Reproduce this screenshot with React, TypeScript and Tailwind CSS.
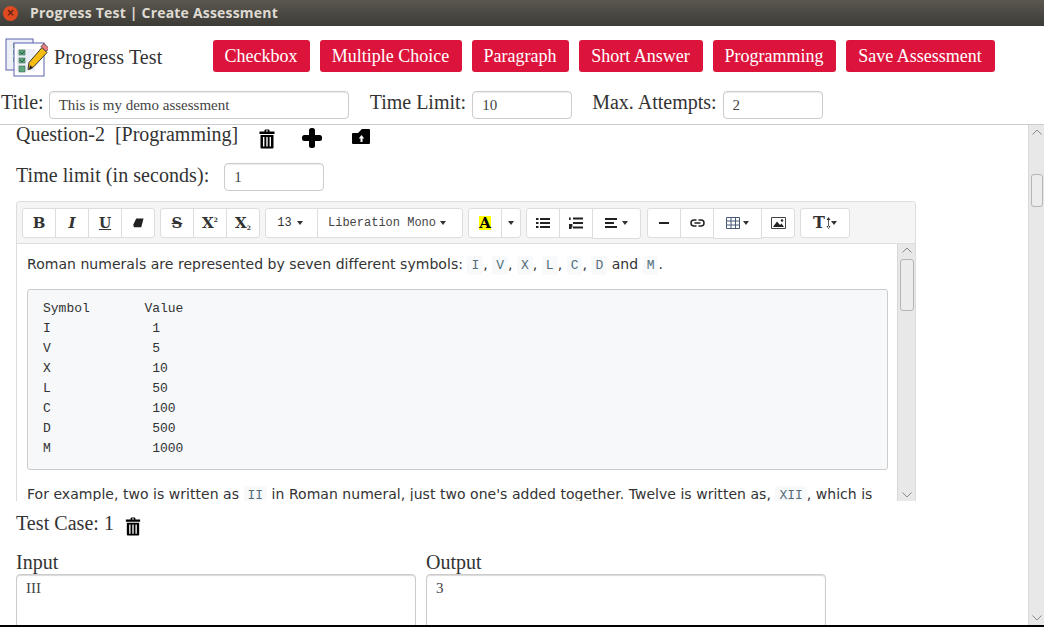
import { ReactNode } from "react";

const TrashIcon = ({ className }: { className?: string }) => (
  <svg viewBox="0 0 16 20" className={className} fill="black">
    <path d="M5.5 1.5 Q5.5 .5 6.5 .5 H9.5 Q10.5 .5 10.5 1.5 V2.5 H15.5 V5 H.5 V2.5 H5.5 Z M7 1.6 V2.5 H9 V1.6 Z" fillRule="evenodd" />
    <path d="M1.5 6 H14.5 V18.5 Q14.5 19.5 13.5 19.5 H2.5 Q1.5 19.5 1.5 18.5 Z M4 8 V17.5 H5.4 V8 Z M7.3 8 V17.5 H8.7 V8 Z M10.6 8 V17.5 H12 V8 Z" fillRule="evenodd" />
  </svg>
);

const PlusIcon = () => (
  <svg viewBox="0 0 20 20" className="w-5 h-5" fill="black">
    <rect x="7" y="0" width="6" height="20" rx="2.5" />
    <rect x="0" y="7" width="20" height="6" rx="2.5" />
  </svg>
);

const FolderUpIcon = () => (
  <svg viewBox="0 0 18 15" className="w-[18px] h-[15px]" fill="black">
    <path fillRule="evenodd" d="M0 5 L0 14 Q0 15 1 15 H17 Q18 15 18 14 V1 Q18 0 17 0 H10 L6 4 H1 Q0 4 0 5 Z M9.5 6 L6.8 9.5 H8.5 V13 H10.5 V9.5 H12.2 Z" />
  </svg>
);

const Logo = () => (
  <svg viewBox="0 0 42 40" className="w-[44px] h-[40px]">
    <rect x="1" y="1" width="27" height="31" fill="#eef0f8" stroke="#5a62ad" strokeWidth="1" />
    <rect x="8" y="19" width="5" height="5" fill="#7fb38f" />
    <rect x="8" y="12" width="5" height="5" fill="#7fb38f" />
    <rect x="8" y="5" width="5" height="5" fill="#7fb38f" />
    <rect x="9" y="5" width="30" height="33" fill="#fff" stroke="#5a62ad" strokeWidth="1" />
    <rect x="12" y="11" width="18" height="22" fill="#eceef7" />
    <rect x="14" y="12" width="6" height="5" fill="#5fa77d" stroke="#3d6b55" strokeWidth=".6" />
    <rect x="14" y="20" width="6" height="5" fill="#5fa77d" stroke="#3d6b55" strokeWidth=".6" />
    <rect x="14" y="28" width="6" height="6" fill="#5fa77d" stroke="#3d6b55" strokeWidth=".6" />
    <path d="M15 14 L17 16 L19.5 13 M15 22 L17 24 L19.5 21" fill="none" stroke="#1f4d3a" strokeWidth=".8" />
    <path d="M24 32 L25 25 L38 10 L43 15 L30 29 Z" fill="#f5bd12" stroke="#37342a" strokeWidth="1" transform="translate(-1 -.5)" />
    <path d="M37 9 L40 6 L45 11 L42 14 Z" fill="#ea7f86" stroke="#37342a" strokeWidth=".8" transform="translate(-1 -.5)" />
    <path d="M24 32 L25 27 L28 30 Z" fill="#222" />
  </svg>
);

const Caret = () => <span className="inline-block w-0 h-0 border-x-[3.5px] border-x-transparent border-t-[4px] border-t-[#333]" />;

const RedButton = ({ children, w }: { children: ReactNode; w: string }) => (
  <button className={`h-8 ${w} rounded-[3px] bg-[#dc143c] text-white text-[18px] leading-8 whitespace-nowrap text-center`}>{children}</button>
);

const TextField = ({ value, className }: { value: string; className: string }) => (
  <div className={`h-7 rounded-[4px] border border-[#ccc] px-[9px] text-[15px] leading-[26px] text-[#444] shadow-[inset_0_1px_1px_rgba(0,0,0,0.075)] ${className}`}>{value}</div>
);

const ToolBtn = ({ children, w, tall }: { children: ReactNode; w: string; tall?: boolean }) => (
  <div className={`${tall ? "h-[31px]" : "h-[30px]"} ${w} -ml-px first:ml-0 bg-white border border-[#ddd] flex items-center justify-center gap-[3px] text-[#333] first:rounded-l-[3px] last:rounded-r-[3px]`}>{children}</div>
);

const ToolGroup = ({ children, className }: { children: ReactNode; className?: string }) => <div className={`flex items-start ${className ?? ""}`}>{children}</div>;

const Bars = ({ d }: { d: string }) => (
  <svg viewBox="0 0 14 12" className="w-[14px] h-3" fill="none" stroke="#222" strokeWidth="1.8"><path d={d} /></svg>
);

const Glyph = ({ children, size }: { children: ReactNode; size: string }) => (
  <b className={`${size} text-[#333] font-['DejaVu_Serif',serif]`}>{children}</b>
);

const Toolbar = () => (
  <div className="h-[42px] shrink-0 bg-[#f5f5f5] border-b border-[#ddd] flex items-center pl-[5px] pt-px gap-[5px]">
    <ToolGroup>
      <ToolBtn w="w-[34px]"><Glyph size="text-[15px]">B</Glyph></ToolBtn>
      <ToolBtn w="w-[34px]"><Glyph size="text-[15px] italic">I</Glyph></ToolBtn>
      <ToolBtn w="w-[34px]"><Glyph size="text-[14px] underline">U</Glyph></ToolBtn>
      <ToolBtn w="w-[34px]">
        <svg viewBox="0 0 12 10" className="w-[11px] h-[10px]" fill="#222"><path d="M3.5 0 H11.5 L9 9.5 H1 L.3 7 Z" /></svg>
      </ToolBtn>
    </ToolGroup>
    <ToolGroup>
      <ToolBtn w="w-[34px]"><Glyph size="text-[15px] line-through">S</Glyph></ToolBtn>
      <ToolBtn w="w-[34px]"><Glyph size="text-[15px]">X<sup className="text-[6px] -top-[6px]">2</sup></Glyph></ToolBtn>
      <ToolBtn w="w-[34px]"><Glyph size="text-[15px]">X<sub className="text-[6px] -bottom-[2px]">2</sub></Glyph></ToolBtn>
    </ToolGroup>
    <ToolGroup>
      <ToolBtn w="w-[53px]"><span className="-ml-[3px] text-[12px] font-['Liberation_Mono',monospace]">13</span><span className="ml-[2px] flex"><Caret /></span></ToolBtn>
      <ToolBtn w="w-[146px]"><span className="-ml-[6px] text-[12px] font-['Liberation_Mono',monospace] text-[#444]">Liberation Mono</span><span className="ml-[1px] flex"><Caret /></span></ToolBtn>
    </ToolGroup>
    <ToolGroup>
      <ToolBtn w="w-[34px]"><b className="bg-[#ff0] w-3 h-[14px] leading-[15px] text-center text-[15px] text-black font-['DejaVu_Serif',serif]">A</b></ToolBtn>
      <ToolBtn w="w-[20px]"><Caret /></ToolBtn>
    </ToolGroup>
    <ToolGroup>
      <ToolBtn w="w-[34px]"><Bars d="M4 2 H14 M4 6 H14 M4 10 H14 M0 2 H2.5 M0 6 H2.5 M0 10 H2.5" /></ToolBtn>
      <ToolBtn w="w-[34px]"><Bars d="M4 1.5 H14 M4 6 H14 M4 10.5 H14 M0.8 .5 V3 M0 8 H2.5 V9.5 H0 V11.5 H2.5" /></ToolBtn>
      <ToolBtn w="w-[49px]" tall><Bars d="M0 2 H12 M0 6 H9 M0 10 H12" /><Caret /></ToolBtn>
    </ToolGroup>
    <ToolGroup className="ml-px">
      <ToolBtn w="w-[34px]"><Bars d="M2 6 H12" /></ToolBtn>
      <ToolBtn w="w-[34px]">
        <svg viewBox="0 0 14 10" className="w-[15px] h-[10px]" fill="none" stroke="#222" strokeWidth="1.5"><path d="M6 2 H3.5 A2.6 2.6 0 0 0 3.5 8 H6 M8 2 H10.5 A2.6 2.6 0 0 1 10.5 8 H8 M4 5 H10" /></svg>
      </ToolBtn>
      <ToolBtn w="w-[49px]" tall>
        <svg viewBox="0 0 14 12" className="w-[14px] h-3" fill="none" stroke="#4a5a78" strokeWidth="1"><path d="M.5 .5 H13.5 V11.5 H.5 Z M.5 4 H13.5 M.5 8 H13.5 M5 .5 V11.5 M9.5 .5 V11.5" /></svg>
        <Caret />
      </ToolBtn>
      <ToolBtn w="w-[34px]">
        <svg viewBox="0 0 15 12" className="w-[15px] h-3"><path d="M.5 .5 H14.5 V11.5 H.5 Z" fill="none" stroke="#444" /><path d="M2 10 L6 4.5 L9 8 L10.5 6.5 L13 10 Z" fill="#222" /><circle cx="11" cy="3.5" r="1.2" fill="#222" /></svg>
      </ToolBtn>
    </ToolGroup>
    <ToolGroup>
      <ToolBtn w="w-[50px]">
        <Glyph size="text-[16px]">T</Glyph>
        <svg viewBox="0 0 5 12" className="w-[5px] h-3 -ml-[2px]" fill="#333"><path d="M2.1 1 H2.9 V11 H2.1 Z M0.5 3 L2.5 0 L4.5 3 Z M0.5 9 L2.5 12 L4.5 9 Z" /></svg>
        <span className="-ml-[3px] flex"><Caret /></span>
      </ToolBtn>
    </ToolGroup>
  </div>
);

const Chevron = ({ up }: { up?: boolean }) => (
  <svg viewBox="0 0 10 6" className="w-[10px] h-[6px]" fill="none" stroke="#888" strokeWidth="1"><path d={up ? "M.5 5.5 L5 1 L9.5 5.5" : "M.5 .5 L5 5 L9.5 .5"} /></svg>
);

const Scrollbar = ({ w, thumbTop, thumbH, thumbW, chevTop, chevBottom }: { w: string; thumbTop: string; thumbH: string; thumbW: string; chevTop: string; chevBottom: string }) => (
  <div className={`${w} shrink-0 bg-[#e8e8e8] border-l border-[#d8d8d8] flex flex-col items-center`}>
    <div className={chevTop}><div className="flex"><Chevron up /></div></div>
    <div className={`${thumbTop} ${thumbH} ${thumbW} shrink-0 rounded-[3px] border border-[#b5b5b5] bg-[#ececec]`} />
    <div className={`mt-auto ${chevBottom} flex`}><Chevron /></div>
  </div>
);

const Code = ({ children }: { children: ReactNode }) => (
  <code className="bg-[#f7f9fa] rounded-[3px] px-[4px] py-[2px] text-[13px] tracking-normal text-[#546e7a] font-['Liberation_Mono',monospace]">{children}</code>
);

const CODE_TEXT = `Symbol       Value
I             1
V             5
X             10
L             50
C             100
D             500
M             1000`;

const Editor = () => (
  <div className="w-[900px] h-[300px] -mt-px border-x border-t border-[#ddd] rounded-t-[4px] flex flex-col overflow-hidden shrink-0">
    <Toolbar />
    <div className="flex flex-1 min-h-0">
      <div className="flex-1 min-w-0 pl-[10px] pr-[9px] pt-[10px] overflow-hidden font-['DejaVu_Sans',sans-serif] text-[14px] tracking-[0.035px] leading-5 text-[#333]">
        <p className="whitespace-nowrap">Roman numerals are represented by seven different symbols: <Code>I</Code>, <Code>V</Code>, <Code>X</Code>, <Code>L</Code>, <Code>C</Code>, <Code>D</Code> and <Code>M</Code>.</p>
        <pre className="mt-[13px] h-[181px] border border-[#ccc] rounded-[3px] bg-[#f6f8fa] pl-[15px] pt-[9px] text-[13px] tracking-normal leading-5 text-[#333] font-['Liberation_Mono',monospace]">{CODE_TEXT}</pre>
        <p className="mt-[14px] whitespace-nowrap">For example, two is written as <Code>II</Code> in Roman numeral, just two one's added together. Twelve is written as, <Code>XII</Code>, which is</p>
      </div>
      <Scrollbar w="w-[18px]" chevTop="pt-[3px]" thumbTop="mt-[6px]" thumbH="h-[52px]" thumbW="w-[14px]" chevBottom="mb-[3px]" />
    </div>
  </div>
);

export default function App() {
  return (
    <div className="w-[1044px] h-[627px] overflow-hidden flex flex-col bg-white border-b-2 border-black font-['Liberation_Serif',serif] text-[#333]">
      <div className="h-[26px] shrink-0 bg-gradient-to-b from-[#5b5850] to-[#3c3b37] flex items-center pl-[3px]">
        <div className="w-[15px] h-[15px] rounded-full bg-[#df4a20] flex items-center justify-center text-[#5b2010] text-[10px] leading-none font-bold font-['DejaVu_Sans',sans-serif]">×</div>
        <span className="ml-[12px] -mt-[2px] text-[14px] font-bold tracking-[0.2px] text-[#dfdbd2] font-['Open_Sans',sans-serif]">Progress Test | Create Assessment</span>
      </div>

      <div className="h-[62px] shrink-0 flex items-center pl-[4px]">
        <div className="mt-[1px]"><Logo /></div>
        <span className="ml-[6px] text-[20px] tracking-[0.15px] text-[#333] whitespace-nowrap -mt-[1px]">Progress Test</span>
        <div className="ml-[50px] flex gap-[10px] -mt-[3px]">
          <RedButton w="w-[97px]">Checkbox</RedButton>
          <RedButton w="w-[142px]">Multiple Choice</RedButton>
          <RedButton w="w-[97px]">Paragraph</RedButton>
          <RedButton w="w-[124px]">Short Answer</RedButton>
          <RedButton w="w-[123px]">Programming</RedButton>
          <RedButton w="w-[149px]">Save Assessment</RedButton>
        </div>
      </div>

      <div className="h-[37px] shrink-0 border-b border-[#ccc] flex items-start pl-px pt-[3px] text-[20px] leading-[22px]">
        <span>Title:</span>
        <TextField value="This is my demo assessment" className="ml-[5px] w-[300px]" />
        <span className="ml-[21px]">Time Limit:</span>
        <TextField value="10" className="ml-[6px] w-[100px]" />
        <span className="ml-[20px]">Max. Attempts:</span>
        <TextField value="2" className="ml-[6px] w-[100px]" />
      </div>

      <div className="flex-1 min-h-0 flex">
        <div className="flex-1 min-w-0 overflow-hidden pl-4 flex flex-col items-start">
          <div className="h-[38px] shrink-0 flex items-start text-[20px] leading-[19px]">
            <span className="whitespace-pre">Question-2  [Programming]</span>
            <span className="ml-[21px] mt-[4px]"><TrashIcon className="w-[16px] h-[20px]" /></span>
            <span className="ml-[27px] mt-[3px]"><PlusIcon /></span>
            <span className="ml-[30px] mt-[4px]"><FolderUpIcon /></span>
          </div>
          <div className="h-[39px] shrink-0 flex items-start text-[20px] tracking-[0.05px] leading-6">
            <span>Time limit (in seconds):</span>
            <TextField value="1" className="ml-[15px] w-[100px]" />
          </div>
          <Editor />
          <div className="h-[50px] shrink-0 flex items-start pt-[10px] text-[20px] tracking-[0.05px] leading-6">
            <span>Test Case: 1</span>
            <span className="ml-[11px] mt-[6px]"><TrashIcon className="w-[16px] h-[19px]" /></span>
          </div>
          <div className="flex gap-[10px] shrink-0">
            <div className="w-[400px]">
              <div className="text-[20px] leading-[23px]">Input</div>
              <div className="h-[80px] border border-[#ccc] rounded-[4px] px-[9px] pt-[3px] text-[15px] leading-5 text-[#444] shadow-[inset_0_1px_1px_rgba(0,0,0,0.15)]">III</div>
            </div>
            <div className="w-[400px]">
              <div className="text-[20px] leading-[23px]">Output</div>
              <div className="h-[80px] border border-[#ccc] rounded-[4px] px-[9px] pt-[3px] text-[15px] leading-5 text-[#444] shadow-[inset_0_1px_1px_rgba(0,0,0,0.15)]">3</div>
            </div>
          </div>
        </div>
        <Scrollbar w="w-[16px]" chevTop="pt-[4px]" thumbTop="mt-[39px]" thumbH="h-[33px]" thumbW="w-[12px]" chevBottom="mb-[4px]" />
      </div>
    </div>
  );
}
